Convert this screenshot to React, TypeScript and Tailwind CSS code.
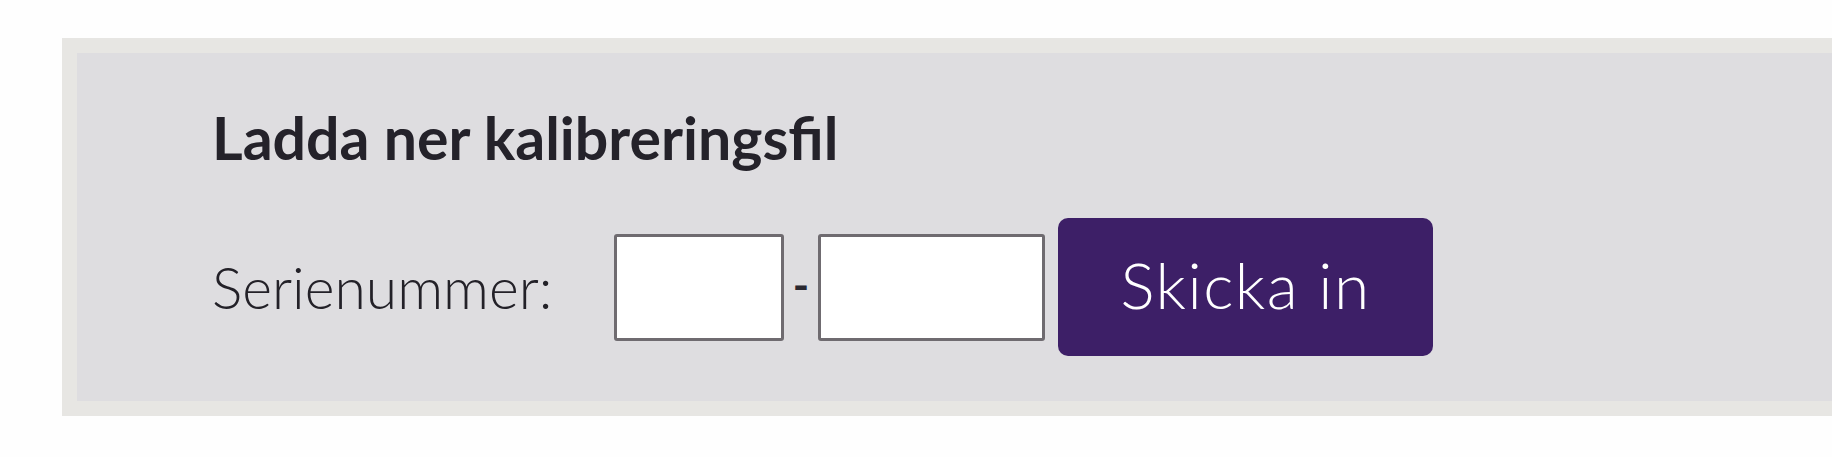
export default function App() {
  return (
    <div className="h-[457px] w-[1832px] overflow-hidden bg-[#fefefe] pl-[62px] pt-[38px] font-['Lato',_'Open_Sans',_sans-serif]">
      <section className="h-[378px] border-[15px] border-r-0 border-[#e7e6e3] bg-[#dedde0] pl-[135px] pt-[49px]">
        <h2 className="text-[59px] font-bold leading-[72px] text-[#24222a]">
          Ladda ner kalibreringsfil
        </h2>
        <form className="mt-[44px] flex items-center" onSubmit={(e) => e.preventDefault()}>
          <label className="w-[402px] text-[57px] font-light leading-none text-[#232128]">
            Serienummer:
          </label>
          <input
            type="text"
            aria-label="Serienummer del 1"
            className="h-[107px] w-[170px] rounded-[3px] border-[3px] border-[#6f6b70] bg-white outline-none"
          />
          <span className="w-[34px] pb-[6px] text-center text-[44px] font-bold leading-none text-[#2a2830]">
            -
          </span>
          <input
            type="text"
            aria-label="Serienummer del 2"
            className="h-[107px] w-[227px] rounded-[3px] border-[3px] border-[#6f6b70] bg-white outline-none"
          />
          <button
            type="submit"
            className="ml-[13px] h-[138px] w-[375px] rounded-[10px] bg-[#3d1f67] pb-[4px] text-[64px] font-light leading-none tracking-[1.5px] text-white"
          >
            Skicka in
          </button>
        </form>
      </section>
    </div>
  );
}
